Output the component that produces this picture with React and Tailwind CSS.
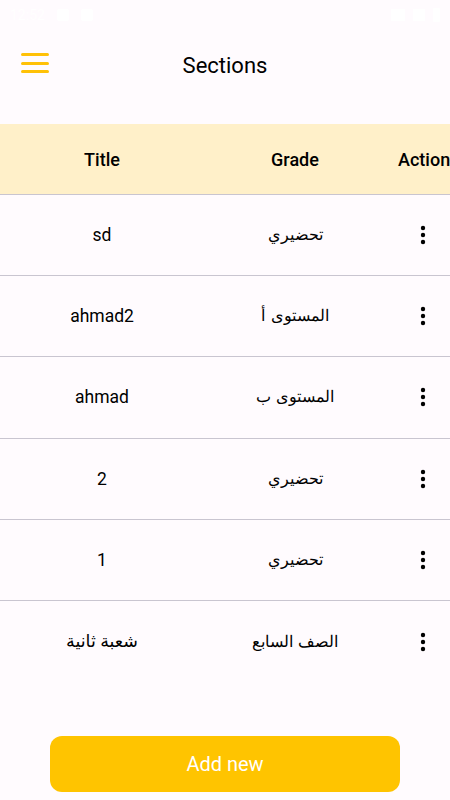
const rows = [
  { title: 'sd', grade: 'تحضيري' },
  { title: 'ahmad2', grade: 'المستوى أ' },
  { title: 'ahmad', grade: 'المستوى ب' },
  { title: '2', grade: 'تحضيري' },
  { title: '1', grade: 'تحضيري' },
  { title: 'شعبة ثانية', grade: 'الصف السابع' },
];

function Kebab() {
  return (
    <svg width="24" height="24" viewBox="0 0 24 24" className="text-black">
      <circle cx="12" cy="5" r="2.2" fill="currentColor" />
      <circle cx="12" cy="12" r="2.2" fill="currentColor" />
      <circle cx="12" cy="19" r="2.2" fill="currentColor" />
    </svg>
  );
}

export default function App() {
  return (
    <div className="w-[450px] h-[800px] bg-[#fffbfe] flex flex-col overflow-hidden font-['Roboto','DejaVu_Sans',sans-serif] text-[#1c1b1f]">
      {/* status bar */}
      <div className="h-[30px] px-[10px] flex items-center justify-between text-white text-[14px]">
        <div className="flex items-center gap-3">
          <span>12:52</span>
          <span className="w-[12px] h-[12px] bg-white rounded-[2px]" />
          <span className="w-[12px] h-[12px] bg-white rounded-[2px]" />
        </div>
        <div className="flex items-center gap-2">
          <span className="w-[14px] h-[12px] bg-white" />
          <span className="w-[12px] h-[12px] bg-white" />
          <span className="w-[7px] h-[14px] bg-white rounded-[1px]" />
        </div>
      </div>

      {/* app bar */}
      <div className="relative h-[68px] flex items-center justify-center">
        <button className="absolute left-[21px] top-[20px] w-[28px] h-[26px] flex flex-col justify-between py-[3px]">
          <span className="block h-[3px] w-full rounded-full bg-[#ffc107]" />
          <span className="block h-[3px] w-full rounded-full bg-[#ffc107]" />
          <span className="block h-[3px] w-full rounded-full bg-[#ffc107]" />
        </button>
        <h1 className="text-[22px] text-black pt-[3px]">Sections</h1>
      </div>

      <div className="h-[26px]" />

      {/* table header */}
      <div className="h-[71px] bg-[#fff0c9] flex items-center border-b border-[#c9c5d0] text-[18px] font-medium text-black whitespace-nowrap overflow-hidden">
        <div className="w-[204px] shrink-0 text-center">Title</div>
        <div className="w-[182px] shrink-0 text-center">Grade</div>
        <div className="flex-1 pl-[12px]">Action</div>
      </div>

      {/* rows */}
      {rows.map((r, i) => (
        <div
          key={i}
          className={`h-[81.2px] flex items-center text-[17.5px] text-black ${i < rows.length - 1 ? 'border-b border-[#c9c5d0]' : ''}`}
        >
          <div className="w-[204px] text-center">{r.title}</div>
          <div className="w-[182px] text-center font-['DejaVu_Sans',sans-serif] font-light text-[16px]">{r.grade}</div>
          <div className="flex-1 flex pl-[25px]">
            <Kebab />
          </div>
        </div>
      ))}

      <div className="flex-1" />

      <div className="flex justify-center pb-[8px]">
        <button className="w-[350px] h-[56px] rounded-[12px] bg-[#ffc400] text-white text-[20px]">
          Add new
        </button>
      </div>
    </div>
  );
}
